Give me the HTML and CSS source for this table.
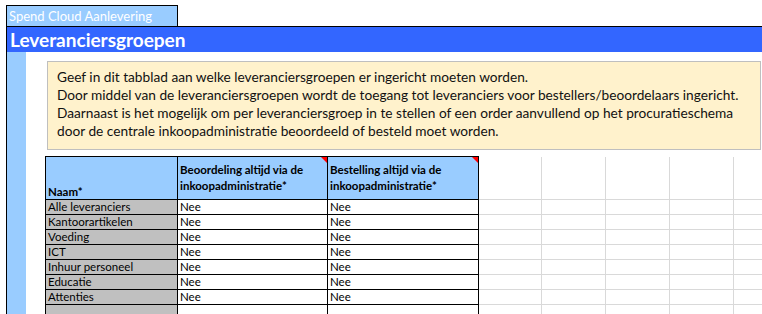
FILE: index.html
```html
<!DOCTYPE html>
<html lang="nl">
<head>
<meta charset="utf-8">
<title>Leveranciersgroepen</title>
<link rel="stylesheet" href="styles.css">
</head>
<body>
<div class="tab">Spend Cloud Aanlevering</div>
<div class="sheet">
  <h1 class="title">Leveranciersgroepen</h1>
  <div class="sheet-body">
    <div class="strip"></div>
    <div class="content">
      <div class="note">
        <p>Geef in dit tabblad aan welke leveranciersgroepen er ingericht moeten worden.</p>
        <p>Door middel van de leveranciersgroepen wordt de toegang tot leveranciers voor bestellers/beoordelaars ingericht.</p>
        <p>Daarnaast is het mogelijk om per leveranciersgroep in te stellen of een order aanvullend op het procuratieschema</p>
        <p>door de centrale inkoopadministratie beoordeeld of besteld moet worden.</p>
      </div>
      <table class="grid">
        <colgroup>
          <col class="c-name"><col class="c-beo"><col class="c-best">
          <col class="c-g1"><col class="c-g"><col class="c-g"><col class="c-g"><col class="c-g">
        </colgroup>
        <thead>
          <tr>
            <th class="h h-name">Naam*</th>
            <th class="h">Beoordeling altijd via de<br>inkoopadministratie*<span class="flag"></span></th>
            <th class="h">Bestelling altijd via de<br>inkoopadministratie*<span class="flag"></span></th>
            <th class="e"></th><th class="e"></th><th class="e"></th><th class="e"></th><th class="e"></th>
          </tr>
        </thead>
        <tbody>
          <tr><td class="n">Alle leveranciers</td><td class="v">Nee</td><td class="v">Nee</td><td class="e"></td><td class="e"></td><td class="e"></td><td class="e"></td><td class="e"></td></tr>
          <tr><td class="n">Kantoorartikelen</td><td class="v">Nee</td><td class="v">Nee</td><td class="e"></td><td class="e"></td><td class="e"></td><td class="e"></td><td class="e"></td></tr>
          <tr><td class="n">Voeding</td><td class="v">Nee</td><td class="v">Nee</td><td class="e"></td><td class="e"></td><td class="e"></td><td class="e"></td><td class="e"></td></tr>
          <tr><td class="n">ICT</td><td class="v">Nee</td><td class="v">Nee</td><td class="e"></td><td class="e"></td><td class="e"></td><td class="e"></td><td class="e"></td></tr>
          <tr><td class="n">Inhuur personeel</td><td class="v">Nee</td><td class="v">Nee</td><td class="e"></td><td class="e"></td><td class="e"></td><td class="e"></td><td class="e"></td></tr>
          <tr><td class="n">Educatie</td><td class="v">Nee</td><td class="v">Nee</td><td class="e"></td><td class="e"></td><td class="e"></td><td class="e"></td><td class="e"></td></tr>
          <tr><td class="n">Attenties</td><td class="v">Nee</td><td class="v">Nee</td><td class="e"></td><td class="e"></td><td class="e"></td><td class="e"></td><td class="e"></td></tr>
          <tr><td class="n"></td><td class="v"></td><td class="v"></td><td class="e"></td><td class="e"></td><td class="e"></td><td class="e"></td><td class="e"></td></tr>
        </tbody>
      </table>
    </div>
  </div>
</div>
</body>
</html>
```

FILE: styles.css
```css
html, body {
  margin: 0;
  padding: 0;
  background: #ffffff;
  overflow: hidden;
  height: 314px;
  font-family: Lato, "Open Sans", sans-serif;
  color: #000000;
}

/* sheet tab */
.tab {
  box-sizing: border-box;
  margin: 5px 0 0 6px;
  width: 172px;
  height: 21px;
  border: 1px solid #000000;
  border-bottom: none;
  background: #99ccff;
  color: #ffffff;
  font-size: 13px;
  line-height: 20px;
  padding-left: 2px;
  white-space: nowrap;
}

.sheet {
  margin-left: 6px;
  border-left: 1px solid #000000;
}

.title {
  margin: 0;
  border-top: 1px solid #000000;
  background: #3366ff;
  color: #ffffff;
  height: 25px;
  font-size: 19px;
  font-weight: 700;
  line-height: 25px;
  padding-left: 3px;
  white-space: nowrap;
}

.sheet-body {
  display: flex;
  height: 262px;
  overflow: hidden;
}

.strip {
  flex: 0 0 19px;
  background: #99ccff;
}

.content {
  flex: 1 1 auto;
  padding: 9px 0 0 19px;
  min-width: 0;
}

/* instruction box */
.note {
  box-sizing: border-box;
  margin-left: 2px;
  width: 714px;
  height: 89px;
  border: 1px solid #bfbfbf;
  background: #fff2cc;
  padding: 6px 0 0 9px;
  font-size: 13.7px;
  line-height: 18px;
  color: #111111;
  white-space: nowrap;
}

.note p {
  margin: 0;
}

/* data grid */
.grid {
  margin-top: 6px;
  border-collapse: collapse;
  table-layout: fixed;
  width: 740px;
  font-size: 11.5px;
}

.c-name { width: 132px; }
.c-beo { width: 150px; }
.c-best { width: 151px; }
.c-g1 { width: 63px; }
.c-g { width: 64px; }

.grid th,
.grid td {
  padding: 0 0 0 2px;
  text-align: left;
  white-space: nowrap;
  overflow: hidden;
}

.grid th.h {
  position: relative;
  height: 41px;
  border: 1px solid #000000;
  background: #99ccff;
  font-weight: 700;
  line-height: 16px;
  vertical-align: middle;
  padding-bottom: 1px;
}

.grid th.h-name {
  vertical-align: bottom;
  line-height: 14px;
  padding-bottom: 0;
}

.grid td {
  height: 14px;
  line-height: 14px;
}

.grid td.n {
  border: 1px solid #000000;
  background: #c0c0c0;
}

.grid td.v {
  border: 1px solid #000000;
  background: #ffffff;
}

.grid .e {
  border-right: 1px solid #d9d9d9;
  border-bottom: 1px solid #d9d9d9;
}

/* comment marker in the corner of a header cell */
.flag {
  position: absolute;
  top: 0;
  right: 0;
  width: 0;
  height: 0;
  border-top: 6px solid #ff0000;
  border-left: 6px solid transparent;
}
```
